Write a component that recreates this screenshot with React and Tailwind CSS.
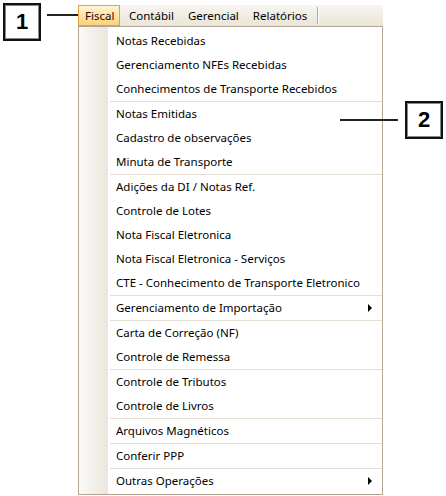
import React from 'react';

const grupos = [
  ['Notas Recebidas', 'Gerenciamento NFEs Recebidas', 'Conhecimentos de Transporte Recebidos'],
  ['Notas Emitidas', 'Cadastro de observações', 'Minuta de Transporte'],
  [
    'Adições da DI / Notas Ref.',
    'Controle de Lotes',
    'Nota Fiscal Eletronica',
    'Nota Fiscal Eletronica - Serviços',
    'CTE - Conhecimento de Transporte Eletronico',
  ],
  ['Gerenciamento de Importação'],
  ['Carta de Correção (NF)', 'Controle de Remessa'],
  ['Controle de Tributos', 'Controle de Livros'],
  ['Arquivos Magnéticos'],
  ['Conferir PPP'],
  ['Outras Operações'],
];

const comSubmenu = ['Gerenciamento de Importação', 'Outras Operações'];

const font = { fontFamily: '"Noto Sans", "Open Sans", sans-serif' };

function Callout({ n }) {
  return (
    <div className="w-[38px] h-[38px] border-2 border-[#111] shadow-[inset_0_0_0_1px_#888] flex items-center justify-center bg-white">
      <span className="text-[22px] font-bold text-black leading-none" style={{ fontFamily: '"Liberation Sans", Arial, sans-serif' }}>
        {n}
      </span>
    </div>
  );
}

function ItemMenu({ label }) {
  return (
    <div className="h-[24px] flex items-center pl-[37px] pr-[10px] text-[11.5px] text-black">
      <span className="flex-1">{label}</span>
      {comSubmenu.includes(label) && (
        <span className="w-0 h-0 border-y-[4px] border-y-transparent border-l-[4px] border-l-black" />
      )}
    </div>
  );
}

export default function App() {
  return (
    <div className="relative w-[446px] h-[496px] bg-white overflow-hidden" style={font}>
      <div className="flex items-start pt-[3px] pl-[3px]">
        <Callout n="1" />
        <div className="mt-[11px] ml-[6px] w-[31px] h-[2px] bg-[#222]" />
        <div className="mt-[2px] w-[305px]">
          <div className="h-[22px] flex items-stretch bg-gradient-to-b from-[#f7f5ef] to-[#e9e5d9] border-b border-[#b3a595] text-[11.5px]">
            <div className="w-[42px] pl-[6px] flex items-center border border-[#e3a23d] bg-gradient-to-b from-[#fff4d2] to-[#f9d27a] text-[#300]">
              Fiscal
            </div>
            <div className="pl-[9px] pr-[7px] flex items-center text-black">Contábil</div>
            <div className="px-[7px] flex items-center text-black">Gerencial</div>
            <div className="px-[7px] flex items-center text-black">Relatórios</div>
            <div className="ml-[3px] my-[2px] w-[2px] border-l border-[#a9a9a9] bg-white" />
          </div>
          <div className="border-x border-b border-[#b3a595] bg-white relative pt-[2px] pb-[1px]">
            <div className="absolute left-0 top-0 bottom-0 w-[29px] bg-gradient-to-r from-[#fbfaf8] to-[#ebe6dc]" />
            <div className="relative">
              {grupos.map((g, i) => (
                <div key={i} className={i > 0 ? 'border-t border-[#e5ded2] ml-[31px]' : ''}>
                  <div className={i > 0 ? '-ml-[31px]' : ''}>
                    {g.map((label) => (
                      <ItemMenu key={label} label={label} />
                    ))}
                  </div>
                </div>
              ))}
            </div>
          </div>
        </div>
      </div>
      {/* callout 2 */}
      <div className="absolute left-[340px] top-[101px] flex items-center">
        <div className="w-[58px] h-[2px] bg-[#222] mr-[7px]" />
        <Callout n="2" />
      </div>
    </div>
  );
}
